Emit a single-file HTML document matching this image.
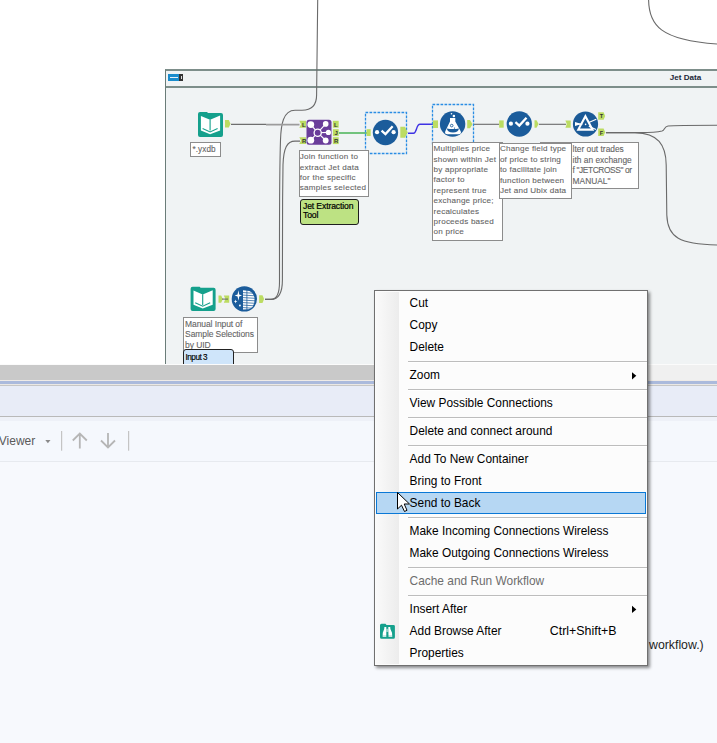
<!DOCTYPE html>
<html><head><meta charset="utf-8">
<style>
html,body{margin:0;padding:0;}
body{width:717px;height:743px;overflow:hidden;position:relative;background:#fff;font-family:"Liberation Sans",sans-serif;}
.abs{position:absolute;}
.lbl{position:absolute;background:#fff;border:1px solid #8c8c8c;color:#646464;-webkit-text-stroke:0.1px #646464;font-size:8.1px;letter-spacing:0.2px;line-height:10.4px;white-space:nowrap;overflow:hidden;box-sizing:border-box;}
.menu{position:absolute;left:374px;top:290px;width:274px;height:376px;box-sizing:border-box;border:1px solid #707070;background:#fcfcfc;box-shadow:2px 2px 3px rgba(0,0,0,0.45);}
.mi{position:absolute;left:34.6px;height:22px;line-height:22px;font-size:11.9px;color:#000;white-space:nowrap;}
.sep{position:absolute;left:32.5px;width:239px;height:1px;background:#bdbdbd;border-bottom:1px solid #fff;}
</style></head><body>

<!-- canvas area -->
<div class="abs" style="left:0;top:0;width:717px;height:364px;background:#fff;"></div>
<!-- container -->
<div class="abs" style="left:165px;top:69px;width:560px;height:295px;background:#f0f3f4;border-left:1.5px solid #6a7c78;border-top:2px solid #7d8e8a;box-sizing:border-box;"></div>
<div class="abs" style="left:166px;top:86px;width:560px;height:2px;background:#7d8e8a;"></div>
<div class="abs" style="left:168px;top:74px;width:11px;height:7px;background:#1a8ccc;"></div>
<div class="abs" style="left:179px;top:74px;width:4px;height:7px;background:#333;"></div>
<div class="abs" style="left:170px;top:77px;width:8px;height:1px;background:#e8f0f8;"></div>
<div class="abs" style="left:180.5px;top:76px;width:1px;height:3px;background:#ddd;"></div>
<div class="abs" style="left:669.7px;top:72.3px;font-size:8.1px;font-weight:bold;color:#1c2838;line-height:12px;">Jet Data</div>

<!-- connections svg -->
<svg class="abs" style="left:0;top:0" width="717" height="364" viewBox="0 0 717 364">
  <g fill="none" stroke="#6a6a6a" stroke-width="1.1">
    <path d="M648.6 0 C649 25 660 40 717 44"/>
    <path d="M265 299.4 L271 299.4 C277 299.4 279.5 293 279.5 282 L279.5 250 C279.5 200 279.8 160 280.5 140 C281 125 283 110.2 295 110.2 L302 110.2 C312 110.2 316.6 105 316.6 95 L317.7 0"/>
    <path d="M265 299.4 L271 299.4 C279 299.4 282.4 292 282.4 280 L282.6 200 L283 165 C283.5 148 287 141.1 295 141.1 L300 141.1"/>
    <path d="M606 132.6 L640 132.6 C652 132.6 658 132 662 131 C665 130 664 126.5 668 126 C675 125.3 690 125.3 717 125.3"/>
    <path d="M606 132.6 L635 132.6 C658 133 666 145 666.2 165 L666.8 215 C667.5 238 680 244 717 245"/>
    <path d="M473 124.3 L499 124.3"/>
    <path d="M539 124.3 L566 124.3"/>
  </g>
  <path d="M231 124.4 L266 124.4" stroke="#6e6e6e" stroke-width="1.1" fill="none"/><path d="M266 124.7 L299.5 124.7" stroke="#9c9c9c" stroke-width="1.7" fill="none"/>
  <path d="M339 133 L367 133" stroke="#3cae4a" stroke-width="1.4" fill="none"/>
  <path d="M408 133.2 L413.5 133.2 C417 133.2 416 124.3 420 124.3 L433 124.3" stroke="#3f33e4" stroke-width="1.4" fill="none"/>
  <!-- selection boxes -->
  <rect x="365.5" y="112.5" width="41" height="41" fill="none" stroke="#2a8de4" stroke-width="1.3" stroke-dasharray="2.7 1.3"/>
  <rect x="432.5" y="104.5" width="41" height="41" fill="none" stroke="#2a8de4" stroke-width="1.3" stroke-dasharray="2.7 1.3"/>
</svg>

<!-- nodes svg -->
<svg class="abs" style="left:0;top:0" width="717" height="364" viewBox="0 0 717 364">
  <!-- book input -->
  <g transform="translate(198,112)">
    <path d="M0 2 Q0 0 2 0 L9 0 L10 1 L23 1 Q25 1 25 3 L25 23 Q25 25 23 25 L2 25 Q0 25 0 23 Z" fill="#15a08c"/>
    <path d="M2.9 3.9 L12.1 7.7 L22.1 3.5 L22.1 18.5 L12.1 22.3 L2.9 18.5 Z" fill="#fff"/>
    <path d="M12.1 7.5 L12.1 18.6 M4.6 16.5 L12.1 20 L19.6 16.5" stroke="#15a08c" stroke-width="1.1" fill="none"/>
  </g>
  <path d="M225 120 L228.8 120 L230.5 123.8 L228.8 127.6 L225 127.6 Z" fill="#bcdc62"/>
  <!-- join -->
  <g transform="translate(306.5,119.8)">
    <rect x="0" y="0" width="25" height="25" rx="2.5" fill="#6a3d9a"/>
    <g stroke="#fff" stroke-width="1.1">
      <line x1="11.2" y1="12.9" x2="4.3" y2="4.8"/><line x1="11.2" y1="12.9" x2="4.3" y2="20.4"/>
      <line x1="11.2" y1="12.9" x2="19.2" y2="4.1"/><line x1="11.2" y1="12.9" x2="21.9" y2="12.6"/>
      <line x1="11.2" y1="12.9" x2="19.2" y2="20.7"/>
    </g>
    <circle cx="11.2" cy="12.9" r="3.6" fill="#6a3d9a" stroke="#fff" stroke-width="1.3"/>
    <circle cx="4.3" cy="4.8" r="3.4" fill="#fff"/><circle cx="4.3" cy="20.4" r="3.4" fill="#fff"/>
    <circle cx="19.2" cy="4.1" r="2.8" fill="#fff"/><circle cx="21.9" cy="12.6" r="2.6" fill="#fff"/>
    <circle cx="19.2" cy="20.7" r="2.9" fill="#fff"/>
  </g>
  <g fill="#bcdc62">
    <path d="M299.3 120.8 L306 120.8 L306 127.7 L299.3 127.7 L301 124.2 Z"/>
    <path d="M299.3 137.2 L306 137.2 L306 144.1 L299.3 144.1 L301 140.6 Z"/>
    <rect x="332.9" y="120.8" width="5.8" height="6.9"/>
    <rect x="332.9" y="129.2" width="5.8" height="6.9"/>
    <rect x="332.9" y="137.2" width="5.8" height="6.9"/>
  </g>
  <g font-family="Liberation Sans" font-size="6" fill="#333" font-weight="bold">
    <text x="302" y="126.8">L</text><text x="302" y="143.2">R</text>
    <text x="334" y="126.8">L</text><text x="334.5" y="135">J</text><text x="334" y="143.2">R</text>
  </g>
  <!-- select 1 -->
  <g transform="translate(385.45,132.5)">
  <circle cx="0" cy="0" r="12.65" fill="#1b5c9b"/>
  <path d="M-3.9 -1.8 L0 1.6 L7.2 -6.2" stroke="#fff" stroke-width="2.3" fill="none"/>
  <circle cx="-8.4" cy="-0.3" r="2.1" fill="#fff"/><circle cx="8.15" cy="-0.3" r="2.1" fill="#fff"/>
  </g>
  <rect x="366.6" y="129.2" width="4.1" height="6.8" fill="#bcdc62"/>
  <path d="M400.3 126.8 L405 126.8 L407.5 132.2 L405 137.7 L400.3 137.7 Z" fill="#bcdc62"/>
  <!-- formula -->
  <circle cx="452.6" cy="124.05" r="12.7" fill="#1b5c9b"/>
  <path d="M450 118 L455.3 118 L455.3 121.5 L460.7 131.3 Q461.8 134.3 458.5 134.3 L447.5 134.3 Q444.2 134.3 445.3 131.3 L450 121.5 Z" fill="#fff"/>
  <path d="M446.8 128.6 Q453 129.6 459 128.6 Q458.3 132.6 453 132.6 Q447.5 132.6 446.8 128.6 Z" fill="#1b5c9b"/>
  <circle cx="451.7" cy="125.6" r="1.3" fill="none" stroke="#1b5c9b" stroke-width="0.9"/>
  <circle cx="454.5" cy="128.1" r="0.7" fill="#1b5c9b"/>
  <circle cx="453.9" cy="116" r="1.25" fill="#fff"/><circle cx="451.5" cy="113.7" r="0.8" fill="#fff"/>
  <rect x="432.9" y="120.4" width="5.1" height="7.6" fill="#bcdc62"/>
  <path d="M467.2 120 L470 120 L472.5 124.2 L470 128.3 L467.2 128.3 Z" fill="#bcdc62"/>
  <!-- select 2 -->
  <g transform="translate(519.3,124)">
  <circle cx="0" cy="0" r="12.65" fill="#1b5c9b"/>
  <path d="M-3.9 -1.8 L0 1.6 L7.2 -6.2" stroke="#fff" stroke-width="2.3" fill="none"/>
  <circle cx="-8.4" cy="-0.3" r="2.1" fill="#fff"/><circle cx="8.15" cy="-0.3" r="2.1" fill="#fff"/>
  </g>
  <rect x="499.2" y="120.4" width="4.5" height="7.3" fill="#bcdc62"/>
  <path d="M534.5 120.3 L536.5 120.3 L538.6 124 L536.5 127.7 L534.5 127.7 Z" fill="#bcdc62"/>
  <!-- filter -->
  <circle cx="585.5" cy="124" r="12.6" fill="#1b5a97"/>
  <path d="M585.4 116.3 L578.3 129.6 L592.5 129.6 Z" fill="none" stroke="#fff" stroke-width="2.1" stroke-linejoin="miter"/>
  <path d="M575 122.1 L575 126 L578.2 125.1 L582.5 124.6 L582.5 123.7 L578.2 123.1 Z" fill="#fff"/>
  <circle cx="585.6" cy="124.4" r="0.8" fill="#fff"/>
  <path d="M588.8 122.6 L596.3 119.2 M588.8 126.2 L596 129.6" stroke="#fff" stroke-width="1.1"/>
  <path d="M565.4 120.4 L570.7 120.4 L570.7 127.7 L565.4 127.7 L566.8 124 Z" fill="#bcdc62"/>
  <path d="M598.2 112.2 L603.6 112.2 L605.2 116 L603.6 119.7 L598.2 119.7 Z" fill="#bcdc62"/>
  <path d="M598.2 128.6 L603.6 128.6 L605.2 132.3 L603.6 136 L598.2 136 Z" fill="#bcdc62"/>
  <g font-family="Liberation Sans" font-size="5.5" fill="#333" font-weight="bold">
    <text x="599.8" y="118.3">T</text><text x="599.8" y="134.5">F</text>
  </g>
  <!-- manual input book -->
  <g transform="translate(190.6,286.7)">
    <path d="M0 2 Q0 0 2 0 L9 0 L10 1 L23 1 Q25 1 25 3 L25 22.3 Q25 24.3 23 24.3 L2 24.3 Q0 24.3 0 22.3 Z" fill="#15a08c"/>
    <path d="M2.9 3.9 L12.1 7.7 L22.1 3.5 L22.1 18 L12.1 21.8 L2.9 18 Z" fill="#fff"/>
    <path d="M12.1 7.5 L12.1 18.2 M4.6 16 L12.1 19.5 L19.6 16" stroke="#15a08c" stroke-width="1.1" fill="none"/>
  </g>
  <path d="M218.5 295.5 L221.2 295.5 L222.8 299.1 L221.2 302.8 L218.5 302.8 Z" fill="#bcdc62"/>
  <path d="M223.8 295.5 L229.2 295.5 L229.2 302.8 L223.8 302.8 L225.4 299.1 Z" fill="#bcdc62"/>
  <path d="M222 299.1 L228 299.1" stroke="#555" stroke-width="0.9"/>
  <circle cx="244.35" cy="298.95" r="12.65" fill="#1b5c9b"/>
  <g fill="#fff">
    <path d="M238.4 290.3 L239.2 294.6 L242 295.5 L239.2 296.4 L238.4 300.7 L237.6 296.4 L234.6 295.5 L237.6 294.6 Z"/>
    <path d="M235.6 299.6 L236.1 301 L237.4 301.5 L236.1 302 L235.6 303.4 L235.1 302 L233.8 301.5 L235.1 301 Z"/>
    <circle cx="239.9" cy="305.5" r="0.95"/>
    <path d="M243 290.2 L249.5 290.9 Q253.5 293 254.6 298 Q254.8 303 252.8 306.5 Q251 308.6 248.5 309.2 L243 309.6 Z"/>
  </g>
  <g stroke="#1b5c9b" stroke-width="0.75">
    <path d="M246.9 290 L246.9 310"/>
    <path d="M243 292.6 L255 293.3 M243 295.1 L255 295.8 M243 297.6 L255 298.3 M243 300.1 L255 300.8 M243 302.6 L255 303.3 M243 305.1 L254 305.8 M243 307.6 L252 308.2"/>
  </g>
  <path d="M259.1 295.3 L262.5 295.3 L264.1 299.1 L262.5 302.9 L259.1 302.9 Z" fill="#bcdc62"/>
</svg>

<!-- labels -->
<div class="lbl" style="left:183.1px;top:317.3px;width:74.5px;height:35.5px;padding:0.6px 0 0 1px;font-size:8.5px;line-height:10.4px;letter-spacing:-0.1px;">Manual Input of<br>Sample Selections<br>by UID</div>
<div class="abs" style="left:183px;top:349.3px;width:51px;height:20px;box-sizing:border-box;border:1.2px solid #222;border-radius:3px 3px 0 0;background:#cfe5fa;font-size:8.2px;line-height:15px;padding-left:1.5px;color:#000;letter-spacing:-0.5px;-webkit-text-stroke:0.15px #000;">Input 3</div>
<div class="lbl" style="left:190.4px;top:142.3px;width:30.8px;height:14.5px;padding:0 0 0 1px;font-size:8.2px;letter-spacing:0.1px;line-height:13px;">*.yxdb</div>
<div class="lbl" style="left:299.2px;top:150.1px;width:69.5px;height:46.5px;padding:1px 0 0 0px;"><div style="margin-left:-0.5px;letter-spacing:0.25px;">Join function to<br>extract Jet data<br>for the specific<br>samples selected</div></div>
<div class="abs" style="left:300px;top:199px;width:59px;height:25.5px;box-sizing:border-box;border:1.3px solid #1e1e1e;border-radius:3px;background:#bde283;font-size:8.6px;line-height:9px;padding:2.2px 0 0 2px;color:#000;letter-spacing:-0.12px;-webkit-text-stroke:0.2px #000;">Jet Extraction<br>Tool</div>
<div class="lbl" style="left:432.4px;top:142.4px;width:70.3px;height:98.5px;padding:0.8px 0 0 0;"><div style="margin-left:0.2px;">Multiplies price<br>shown within Jet<br>by appropriate<br>factor to<br>represent true<br>exchange price;<br>recalculates<br>proceeds based<br>on price</div></div>
<div class="lbl" style="left:540px;top:142.3px;width:98.5px;height:46.3px;padding:0.9px 0 0 31.6px;line-height:10.45px;font-size:8.4px;letter-spacing:0;">lter out trades<br>ith an exchange<br><span style="letter-spacing:-0.4px">f "JETCROSS" or</span><br>MANUAL"</div>
<div class="lbl" style="left:499.2px;top:142.6px;width:72.6px;height:56.3px;padding:0.8px 0 0 0;"><div style="margin-left:-0.3px;">Change field type<br>of price to string<br>to facilitate join<br>function between<br>Jet and Ubix data</div></div>

<!-- splitter and panels -->
<div class="abs" style="left:0;top:364px;width:717px;height:1px;background:#fbfbfb;"></div>
<div class="abs" style="left:0;top:365px;width:717px;height:15px;background:#f0f0f0;"></div>
<div class="abs" style="left:0;top:365px;width:374px;height:15px;background:#c9c9c9;"></div>
<div class="abs" style="left:0;top:380px;width:717px;height:1px;background:#efebe7;"></div>
<div class="abs" style="left:0;top:381px;width:717px;height:3px;background:#abbadc;"></div>
<div class="abs" style="left:0;top:384px;width:717px;height:1px;background:#ebe8e4;"></div>
<div class="abs" style="left:0;top:385px;width:717px;height:1px;background:#c6c6c6;"></div>
<div class="abs" style="left:0;top:386px;width:717px;height:30px;background:#e8ecf7;"></div>
<div class="abs" style="left:0;top:416px;width:717px;height:1px;background:#b9b9b9;"></div>
<div class="abs" style="left:0;top:417px;width:717px;height:4px;background:#eef1f8;"></div>
<div class="abs" style="left:0;top:421px;width:717px;height:40px;background:#f5f8fd;"></div>
<div class="abs" style="left:0;top:461px;width:717px;height:1px;background:#e7eaef;"></div>
<div class="abs" style="left:0;top:462px;width:717px;height:281px;background:#f7f9fd;"></div>

<div class="abs" style="left:-1.2px;top:433px;font-size:12px;line-height:16px;color:#5a5a5a;">Viewer</div>
<svg class="abs" style="left:0;top:420px" width="140" height="40" viewBox="0 420 140 40">
  <path d="M45.3 440 L50.5 440 L47.9 443.3 Z" fill="#8a8a8a"/>
  <rect x="61" y="431" width="1.2" height="19.7" fill="#c4c4c4"/>
  <rect x="128" y="431" width="1.2" height="19.7" fill="#c4c4c4"/>
  <g stroke="#b6b6b6" stroke-width="1.8" fill="none">
    <path d="M79.8 448.5 L79.8 434 M72.8 440.5 L79.8 433.5 L86.8 440.5"/>
    <path d="M108 433 L108 447.5 M101 440.5 L108 447.5 L115 440.5"/>
  </g>
</svg>
<div class="abs" style="left:649px;top:637px;font-size:12.3px;line-height:16px;color:#1e1e1e;">workflow.)</div>

<!-- context menu -->
<div class="menu">
  <div class="abs" style="left:1px;top:1px;width:23px;height:372px;background:linear-gradient(to right,#fafafa,#ececec);"></div>
  <div class="mi" style="top:1px;">Cut</div>
  <div class="mi" style="top:23px;">Copy</div>
  <div class="mi" style="top:45px;">Delete</div>
  <div class="sep" style="top:70px;"></div>
  <div class="mi" style="top:73px;">Zoom</div>
  <div class="sep" style="top:98px;"></div>
  <div class="mi" style="top:101px;">View Possible Connections</div>
  <div class="sep" style="top:126px;"></div>
  <div class="mi" style="top:129px;">Delete and connect around</div>
  <div class="sep" style="top:154px;"></div>
  <div class="mi" style="top:157px;">Add To New Container</div>
  <div class="mi" style="top:179px;">Bring to Front</div>
  <div class="abs" style="left:1px;top:201px;width:270px;height:22px;box-sizing:border-box;border:1px solid #0a78d6;background:#b6d7f3;"></div>
  <div class="mi" style="top:201px;">Send to Back</div>
  <div class="sep" style="top:226px;"></div>
  <div class="mi" style="top:229px;">Make Incoming Connections Wireless</div>
  <div class="mi" style="top:251px;">Make Outgoing Connections Wireless</div>
  <div class="sep" style="top:276px;"></div>
  <div class="mi" style="top:279px;color:#6d6d6d;">Cache and Run Workflow</div>
  <div class="sep" style="top:304px;"></div>
  <div class="mi" style="top:307px;">Insert After</div>
  <div class="mi" style="top:329px;">Add Browse After</div>
  <div class="mi" style="top:329px;left:174.8px;font-size:12.4px;">Ctrl+Shift+B</div>
  <div class="mi" style="top:351px;">Properties</div>
  <svg class="abs" style="left:0;top:0" width="272" height="374">
    <path d="M257 81.2 L261.3 84.8 L257 88.4 Z" fill="#000"/>
    <path d="M257 314.8 L261.3 318.4 L257 322 Z" fill="#000"/>
    <g transform="translate(5,332.8)">
      <path d="M0 1.5 Q0 0 1.5 0 L5.5 0 L6.5 1.1 L13.5 1.1 Q14.9 1.1 14.9 2.5 L14.9 13.4 Q14.9 14.9 13.5 14.9 L1.5 14.9 Q0 14.9 0 13.4 Z" fill="#15a08c"/>
      <path d="M4.4 3.2 L6.3 3.2 L6.3 12.9 L2.6 12.9 L2.8 9 L4.2 5.2 Z" fill="#fff"/>
      <path d="M8.3 3.2 L10.2 3.2 L10.4 5.2 L12 9 L12.3 12.9 L8.5 12.9 Z" fill="#fff"/>
      <rect x="6.3" y="5" width="2" height="3.2" fill="#fff" opacity="0.55"/>
      <rect x="2.6" y="11.3" width="10" height="0.5" fill="#15a08c" opacity="0.4"/>
    </g>
  </svg>
</div>
<!-- cursor -->
<svg class="abs" style="left:396px;top:491px" width="16" height="24" viewBox="0 0 16 24">
  <path d="M1.5 1.5 L1.5 18 L5.5 14.2 L8.5 20.5 L11 19.3 L8.2 13 L13.5 13 Z" fill="#fff" stroke="#000" stroke-width="1" stroke-linejoin="miter"/>
</svg>
</body></html>
